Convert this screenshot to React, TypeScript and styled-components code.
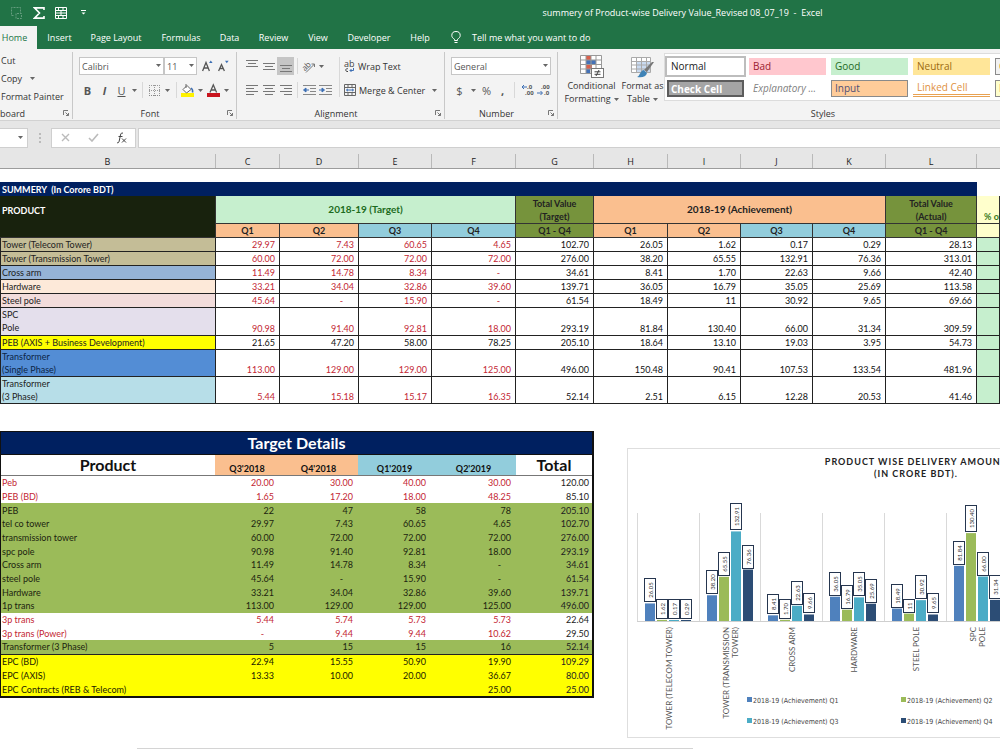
import React from "react";
import styled, { createGlobalStyle, css } from "styled-components";

const GlobalStyle = createGlobalStyle`
  * { box-sizing: border-box; }
  html, body { margin: 0; background: #fff; overflow-x: hidden; }
  body { font-family: "Open Sans", "Noto Sans", sans-serif; font-size: 9px; color: #333; }
  button, input, select { font: inherit; color: inherit; margin: 0; padding: 0; border: 0; background: none; }
`;

const SHEET_FONT = `Lato, "Open Sans", sans-serif`;
const RED = "#c32633";

/* ---------- Title bar and tabs ---------- */

const TitleBar = styled.header`
  display: flex;
  align-items: center;
  height: 26px;
  padding-bottom: 1px;
  background: #217346;
  color: #fff;
`;
const QuickAccess = styled.div`
  display: flex;
  align-items: center;
  gap: 8px;
  width: 365px;
  padding-left: 10px;
`;
const QuickButton = styled.button<{ $faded?: boolean }>`
  display: flex;
  justify-content: center;
  width: 14px;
  opacity: ${(p) => (p.$faded ? 0.3 : 1)};
`;
const DocumentTitle = styled.div`
  flex: 1;
  text-align: center;
  white-space: pre;
`;
const TabBar = styled.nav`
  display: flex;
  height: 23px;
  background: #217346;
  color: #fff;
`;
const Tab = styled.a<{ $active?: boolean; $width: number }>`
  display: flex;
  align-items: center;
  justify-content: center;
  width: ${(p) => p.$width}px;
  padding-right: ${(p) => (p.$active ? 8 : 0)}px;
  color: ${(p) => (p.$active ? "#217346" : "#fff")};
  background: ${(p) => (p.$active ? "#f3f3f3" : "transparent")};
  text-decoration: none;
  white-space: nowrap;
`;
const TellMe = styled.button`
  display: flex;
  align-items: center;
  gap: 11px;
  padding-left: 13px;
`;

/* ---------- Ribbon ---------- */

const Ribbon = styled.section`
  display: flex;
  height: 72px;
  padding-top: 3px;
  overflow: hidden;
  background: #f3f3f3;
  border-bottom: 1px solid #d2d2d2;
`;
const Group = styled.div<{ $width: number }>`
  display: flex;
  flex-direction: column;
  justify-content: space-between;
  flex: 0 0 ${(p) => p.$width}px;
  height: 67px;
  border-right: 1px solid #c8c8c8;
`;
const GroupBody = styled.div<{ $top?: number; $pad?: number }>`
  display: flex;
  padding-top: ${(p) => p.$top ?? 5}px;
  padding-left: ${(p) => p.$pad ?? 6}px;
`;
const Stack = styled.div<{ $gap?: number }>`
  display: flex;
  flex-direction: column;
  gap: ${(p) => p.$gap ?? 6}px;
`;
const ToolRow = styled.div`
  display: flex;
  align-items: center;
  height: 18px;
`;
const GroupFooter = styled.div`
  display: flex;
  align-items: center;
  height: 12px;
  padding-right: 3px;
`;
const GroupName = styled.span<{ $start?: boolean }>`
  flex: 1;
  text-align: ${(p) => (p.$start ? "left" : "center")};
`;
const ClipButton = styled.button`
  display: flex;
  align-items: center;
  gap: 8px;
  height: 17px;
  padding-left: 1px;
  white-space: nowrap;
`;
const Tool = styled.button<{ $w: number; $on?: boolean }>`
  display: flex;
  align-items: center;
  justify-content: center;
  width: ${(p) => p.$w}px;
  height: 18px;
  background: ${(p) => (p.$on ? "#c5c5c5" : "transparent")};
  font-size: 11px;
  color: #555;
  svg { overflow: visible; }
`;
const Rule = styled.span<{ $w: number; $h?: number }>`
  display: flex;
  justify-content: center;
  width: ${(p) => p.$w}px;
  &::before { content: ""; width: 1px; height: ${(p) => p.$h ?? 16}px; background: #d8d8d8; }
`;
const TextTool = styled.button`
  display: flex;
  align-items: center;
  gap: 3px;
  height: 18px;
  white-space: nowrap;
  svg { overflow: visible; }
`;
const ArrowSlot = styled.span`
  display: flex;
  justify-content: center;
  width: 12px;
`;
const SelectWrap = styled.label<{ $w: number }>`
  position: relative;
  width: ${(p) => p.$w}px;
  height: 18px;
  select {
    width: 100%;
    height: 18px;
    padding-left: 2px;
    appearance: none;
    background: #fff;
    border: 1px solid #c6c6c6;
    border-radius: 0;
    color: #555;
  }
  svg { position: absolute; right: 3px; top: 7px; }
`;
const BigTool = styled.button<{ $w: number }>`
  display: flex;
  flex-direction: column;
  align-items: center;
  gap: 1px;
  width: ${(p) => p.$w}px;
  padding-top: 2px;
  line-height: 12px;
  white-space: nowrap;
`;
const WithArrow = styled.span`
  display: flex;
  align-items: center;
  gap: 3px;
`;
const Gallery = styled.div`
  display: grid;
  grid-template-columns: repeat(5, 77px);
  grid-auto-rows: 17px;
  gap: 5px;
  flex: 1;
  min-width: 0;
  height: 48px;
  padding: 4px 0 0 2px;
  background: #fff;
  border: 1px solid #dcdcdc;
  border-right: 0;
`;
const StyleSwatch = styled.button<{ $bg?: string; $fg?: string; $kind?: string }>`
  padding-left: 4px;
  overflow: hidden;
  text-align: left;
  font-size: 10px;
  line-height: 15px;
  white-space: nowrap;
  background: ${(p) => p.$bg ?? "#fff"};
  color: ${(p) => p.$fg ?? "#222"};
  ${(p) => p.$kind === "selected" && css`outline: 2px solid #bdbdbd;`}
  ${(p) => p.$kind === "check" && css`border: 2px solid #5c5c5c; padding-left: 2px; line-height: 12px; font-weight: 700;`}
  ${(p) => p.$kind === "boxed" && css`border: 1px solid #8a8a8a; padding-left: 3px;`}
  ${(p) => p.$kind === "italic" && css`font-style: italic;`}
  ${(p) => p.$kind === "linked" && css`border-bottom: 3px double #e8a252;`}
`;

/* ---------- Formula bar ---------- */

const FormulaBar = styled.section`
  display: flex;
  align-items: center;
  height: 33px;
  background: #e6e6e6;
`;
const NameBox = styled.button`
  display: flex;
  align-items: center;
  justify-content: flex-end;
  width: 28px;
  height: 20px;
  padding-right: 4px;
  background: #fff;
  border: 1px solid #cfcfcf;
  border-left: 0;
`;
const Grip = styled.span`
  width: 23px;
  display: flex;
  justify-content: center;
`;
const FormulaActions = styled.div`
  display: flex;
  align-items: center;
  width: 85px;
  height: 20px;
  background: #fff;
  border: 1px solid #cfcfcf;
`;
const FormulaAction = styled.button`
  display: flex;
  justify-content: center;
  width: 28px;
`;
const FormulaInput = styled.input`
  flex: 1;
  min-width: 0;
  height: 20px;
  margin-left: 2px;
  background: #fff;
  border: 1px solid #cfcfcf;
  border-right: 0;
`;

/* ---------- Sheet ---------- */

const ColumnHeads = styled.div`
  display: flex;
  height: 15px;
  background: #e6e6e6;
  border-bottom: 1px solid #9c9c9c;
`;
const ColumnHead = styled.div<{ $w?: number }>`
  flex: ${(p) => (p.$w ? `0 0 ${p.$w}px` : "1 0 0")};
  padding-top: 2px;
  line-height: 12px;
  text-align: center;
  color: #222;
  border-right: ${(p) => (p.$w ? "1px solid #b9b9b9" : "0")};
`;
const Sheet = styled.main`
  overflow: hidden;
  padding-top: 13px;
  background: #fff;
  font-family: ${SHEET_FONT};
  color: #111;
`;
const SummaryTable = styled.table`
  width: 100%;
  height: 222px;
  table-layout: fixed;
  border-collapse: separate;
  border-spacing: 0;
  line-height: 13px;
  thead tr:nth-child(2) { height: 28px; }
`;
const Cell = styled.td<{ $bg?: string; $fg?: string; $dash?: boolean }>`
  padding: 0 ${(p) => (p.$dash ? 15 : 4)}px 0 0;
  overflow: hidden;
  text-align: right;
  vertical-align: bottom;
  white-space: nowrap;
  background: ${(p) => p.$bg ?? "transparent"};
  color: ${(p) => p.$fg ?? "#111"};
  border: solid #222;
  border-width: 0 1px 1px 0;
`;
const Label = styled.th<{ $bg: string; $fg?: string }>`
  padding: 0 0 0 1px;
  text-align: left;
  font-weight: 400;
  white-space: pre-line;
  background: ${(p) => p.$bg};
  color: ${(p) => p.$fg ?? "#222"};
  border: solid #222;
  border-width: 0 1px 1px 1px;
`;
const Head = styled.th<{ $bg: string; $fg?: string; $left?: number; $plain?: boolean; $size?: number }>`
  height: 14px;
  padding: 0 0 0 ${(p) => p.$left ?? 0}px;
  overflow: hidden;
  text-align: ${(p) => (p.$left ? "left" : "center")};
  font-weight: 700;
  font-size: ${(p) => p.$size ?? 9}px;
  white-space: pre;
  background: ${(p) => p.$bg};
  color: ${(p) => p.$fg ?? "#222"};
  border: solid #333;
  border-width: ${(p) => (p.$plain ? "0" : "0 1px 1px 0")};
`;

const Lower = styled.div`
  display: flex;
  align-items: flex-start;
  gap: 33px;
  padding-top: 27px;
`;
const DetailTable = styled.table`
  flex: 0 0 594px;
  width: 594px;
  height: 267px;
  table-layout: fixed;
  border-collapse: separate;
  border-spacing: 0;
  border: solid #111;
  border-width: 1px 2px 2px 1px;
  line-height: 13px;
`;
const DetailTitle = styled.th`
  height: 23px;
  padding: 0;
  background: #002060;
  color: #fff;
  font-size: 16px;
  line-height: 20px;
  border-bottom: 1px solid #111;
`;
const DetailHead = styled.th<{ $bg?: string; $big?: boolean }>`
  height: 21px;
  padding: 0;
  vertical-align: bottom;
  background: ${(p) => p.$bg ?? "#fff"};
  font-size: ${(p) => (p.$big ? 16 : 9)}px;
  line-height: ${(p) => (p.$big ? 20 : 13)}px;
  border-bottom: 1px solid #777;
`;
const DetailRow = styled.tr<{ $bg: string; $fg: string; $line?: boolean }>`
  background: ${(p) => p.$bg};
  color: ${(p) => p.$fg};
  th { padding: 0 0 0 1px; text-align: left; font-weight: 400; }
  th, td { border-bottom: ${(p) => (p.$line ? "1px solid #222" : "0")}; }
`;
const DetailCell = styled.td<{ $dash?: boolean; $total?: boolean }>`
  padding: 0 ${(p) => (p.$dash ? 15 : p.$total ? 3 : 5)}px 0 0;
  text-align: right;
  color: ${(p) => (p.$total ? "#222" : "inherit")};
`;
const ChartCard = styled.figure`
  flex: 0 0 578px;
  height: 290px;
  margin: 17px 0 0;
  padding-top: 7px;
  border: 1px solid #dedede;
`;
const ChartTitle = styled.figcaption`
  height: 25px;
  text-align: center;
  white-space: pre-line;
  font-weight: 700;
  line-height: 12px;
  letter-spacing: 1px;
  color: #222;
`;
const NextChart = styled.div`
  width: 556px;
  height: 2px;
  margin: 10px 0 0 137px;
  border-top: 1px solid #d4d4d4;
`;

/* ---------- Icons ---------- */

const Arrow = ({ color = "#666" }: { color?: string }) => (
  <svg width="5" height="3" viewBox="0 0 5 3"><path d="M0 0h5L2.5 3z" fill={color} /></svg>
);
const Launcher = () => (
  <svg width="6" height="6" viewBox="0 0 6 6" fill="none" stroke="#777">
    <path d="M.5 5V.5H5M2.5 2.5l3 3M5.5 3v2.5H3" />
  </svg>
);
const Lines = ({ widths, align, top = 0 }: { widths: number[]; align: "l" | "c" | "r"; top?: number }) => (
  <svg width="12" height="12" viewBox="0 0 12 12" shapeRendering="crispEdges">
    {widths.map((w, i) => (
      <rect key={i} x={align === "l" ? 0 : align === "c" ? (12 - w) / 2 : 12 - w} y={top + i * 3} width={w} height="1" fill="#777" />
    ))}
  </svg>
);
const Indent = ({ inward }: { inward?: boolean }) => (
  <svg width="13" height="11" viewBox="0 0 13 11">
    <path d="M0 .5h13M7 3.500h6M7 6.500h6M0 9.500h13" stroke="#888" />
    <path d={inward ? "M0 5h3.500M3 3l2.500 2L3 7z" : "M2 5h4M3 3L.5 5 3 7z"} stroke="#3d6fb4" fill="#3d6fb4" />
  </svg>
);
const Bulb = () => (
  <svg width="10" height="13" viewBox="0 0 10 13" fill="none" stroke="#fff">
    <path d="M3.500 9.500V8.300C2 7.300.8 6.200.8 4.500a4.200 4 0 0 1 8.400 0c0 1.700-1.200 2.800-2.700 3.800v1.200zM3.500 11.500h3" />
  </svg>
);
const TableGlyph = () => (
  <svg width="12" height="12" viewBox="0 0 12 12" fill="none" stroke="#fff">
    <path d="M.5.5h11v11H.5zM.5 3.500h11M.5 6h11M.5 8.500h11M3.500.5v3M8 .5v3M6 3.500v5M3.500 8.500v3M8 8.500v3" />
  </svg>
);
const MergeGlyph = () => (
  <svg width="12" height="12" viewBox="0 0 12 12" fill="none" stroke="#666">
    <path d="M.5.5h11v11H.5zM.5 3.500h11M.5 8.500h11M4 .5v3M8 .5v3M4 8.500v3M8 8.500v3" />
    <path d="M2.500 6h7M4 4.800L2.500 6 4 7.200M8 4.800L9.500 6 8 7.200" stroke="#3d6fb4" />
  </svg>
);
const WrapGlyph = () => (
  <svg width="11" height="13" viewBox="0 0 11 13">
    <text x="0" y="7" fontSize="9" fill="#444">ab</text>
    <path d="M4 8.800c-3-1-3 3.400 0 2.700" fill="none" stroke="#444" />
    <path d="M9.500 8v2.500H6M7.500 9L6 10.500 7.500 12" fill="none" stroke="#3d6fb4" />
  </svg>
);
const OrientGlyph = () => (
  <svg width="14" height="13" viewBox="0 0 14 13">
    <text x="1" y="9" fontSize="8" fill="#555" transform="rotate(-45 5 8)">ab</text>
    <path d="M4 12.500L12.500 4M9.500 4h3v3" fill="none" stroke="#777" />
  </svg>
);
const BorderGlyph = () => (
  <svg width="11" height="11" viewBox="0 0 11 11" fill="none" stroke="#999" strokeDasharray="1 1">
    <path d="M.5 0v11M5.500 0v11M10.500 0v11M0 .5h11M0 5.500h11" /><path d="M0 10.500h11" stroke="#888" />
  </svg>
);
const BucketGlyph = () => (
  <svg width="13" height="13" viewBox="0 0 13 13">
    <rect y="9" width="13" height="4" fill="#fff200" />
    <path d="M6 1.500l4 4L5.500 9 2 5.500zM5 0v4" fill="#fff" stroke="#666" />
    <path d="M10 4c1.500 1 2 2.500 1.500 4.500" fill="none" stroke="#3d6fb4" strokeWidth="1.500" />
  </svg>
);
const FontColorGlyph = () => (
  <svg width="13" height="13" viewBox="0 0 13 13">
    <path d="M3 8.500L6.300.8l3.300 7.700M4.200 6h4.200" fill="none" stroke="#555" strokeWidth="1.300" />
    <rect y="9" width="13" height="4" fill="#c8141e" />
  </svg>
);
const FontSizeGlyph = ({ up }: { up?: boolean }) => (
  <svg width="11" height="12" viewBox="0 0 11 12">
    <path d={up ? "M.6 11L4 2.500 7.400 11M1.800 8h4.400" : "M.6 11L3.500 4.500 6.400 11M1.800 8.500h3.400"} fill="none" stroke="#555" strokeWidth="1.300" />
    <path d={up ? "M7 3l1.800-2.500L10.600 3z" : "M7 .8h3.600L8.800 3.300z"} fill="#3d6fb4" />
  </svg>
);
const DecimalGlyph = ({ more }: { more?: boolean }) => (
  <svg width="13" height="12" viewBox="0 0 13 12">
    <text x={more ? 6 : 4} y="5" fontSize="6" fontWeight="700" fill="#555">{more ? ".0" : ".00"}</text>
    <text x={more ? 4 : 7} y="11" fontSize="6" fontWeight="700" fill="#555">{more ? ".00" : ".0"}</text>
    <path d={more ? "M1 3h5M3 1L1 3l2 2" : "M0 9h5M3.500 7l2 2-2 2"} fill="none" stroke="#3d6fb4" />
  </svg>
);
const ConditionalGlyph = () => (
  <svg width="24" height="24" viewBox="0 0 24 24">
    <rect x="1" y="1" width="20" height="18" fill="#fff" />
    <rect x="6" y="1" width="5" height="4" fill="#d9604c" /><rect x="6" y="5" width="10" height="5" fill="#4472b8" />
    <rect x="6" y="10" width="6" height="4" fill="#d9604c" /><rect x="6" y="14" width="4" height="5" fill="#4472b8" />
    <path d="M.5.5h21v18H.5zM.5 5h21M.5 9.500h21M.5 14h21M6 .5v18M11 .5v18M16 .5v18" fill="none" stroke="#999" />
    <rect x="11.500" y="13.500" width="12" height="9" fill="#fff" stroke="#777" />
    <path d="M14.500 16.800h6M14.500 19.300h6M19 15l-3 6" stroke="#444" />
  </svg>
);
const FormatTableGlyph = () => (
  <svg width="24" height="24" viewBox="0 0 24 24">
    <rect x="1" y="3" width="19" height="14" fill="#fff" /><rect x="6" y="6" width="14" height="11" fill="#c9daf0" />
    <path d="M.5 2.500h19v15H.5zM.5 6.500h19M.5 10h19M.5 14h19M5.500 2.500v15M10.500 2.500v15M15.500 2.500v15" fill="none" stroke="#aaa" />
    <path d="M23 7l-7 10-3-2 8-8z" fill="#777" />
    <path d="M12.500 15l3.500 3c-1 4-5 5-10 4 3-1 3-6 6.500-7z" fill="#3f83b7" />
  </svg>
);

/* ---------- Data ---------- */

const columns: [string, number][] = [
  ["B", 216], ["C", 64], ["D", 79], ["E", 73], ["F", 84], ["G", 78],
  ["H", 74], ["I", 73], ["J", 72], ["K", 73], ["L", 91],
];

type SummaryRow = { label: string; bg: string; fg?: string; black?: boolean; values: string[] };
const summary: SummaryRow[] = [
  { label: "Tower (Telecom Tower)", bg: "#c4bd97", values: "29.97 7.43 60.65 4.65 102.70 26.05 1.62 0.17 0.29 28.13".split(" ") },
  { label: "Tower (Transmission Tower)", bg: "#c4bd97", values: "60.00 72.00 72.00 72.00 276.00 38.20 65.55 132.91 76.36 313.01".split(" ") },
  { label: "Cross arm", bg: "#95b3d7", values: "11.49 14.78 8.34 - 34.61 8.41 1.70 22.63 9.66 42.40".split(" ") },
  { label: "Hardware", bg: "#fde9d9", values: "33.21 34.04 32.86 39.60 139.71 36.05 16.79 35.05 25.69 113.58".split(" ") },
  { label: "Steel pole", bg: "#f2dcdb", values: "45.64 - 15.90 - 61.54 18.49 11 30.92 9.65 69.66".split(" ") },
  { label: "SPC\nPole", bg: "#e4dfec", values: "90.98 91.40 92.81 18.00 293.19 81.84 130.40 66.00 31.34 309.59".split(" ") },
  { label: "PEB (AXIS + Business Development)", bg: "#ffff00", black: true, values: "21.65 47.20 58.00 78.25 205.10 18.64 13.10 19.03 3.95 54.73".split(" ") },
  { label: "Transformer\n(Single Phase)", bg: "#538dd5", fg: "#0c2445", values: "113.00 129.00 129.00 125.00 496.00 150.48 90.41 107.53 133.54 481.96".split(" ") },
  { label: "Transformer\n(3 Phase)", bg: "#b7dee8", values: "5.44 15.18 15.17 16.35 52.14 2.51 6.15 12.28 20.53 41.46".split(" ") },
];

type Tone = "plain" | "green" | "yellow";
const details: [string, Tone, string][] = [
  ["Peb", "plain", "20.00 30.00 40.00 30.00 120.00"],
  ["PEB (BD)", "plain", "1.65 17.20 18.00 48.25 85.10"],
  ["PEB", "green", "22 47 58 78 205.10"],
  ["tel co tower", "green", "29.97 7.43 60.65 4.65 102.70"],
  ["transmission tower", "green", "60.00 72.00 72.00 72.00 276.00"],
  ["spc pole", "green", "90.98 91.40 92.81 18.00 293.19"],
  ["Cross arm", "green", "11.49 14.78 8.34 - 34.61"],
  ["steel pole", "green", "45.64 - 15.90 - 61.54"],
  ["Hardware", "green", "33.21 34.04 32.86 39.60 139.71"],
  ["1p trans", "green", "113.00 129.00 129.00 125.00 496.00"],
  ["3p trans", "plain", "5.44 5.74 5.73 5.73 22.64"],
  ["3p trans (Power)", "plain", "- 9.44 9.44 10.62 29.50"],
  ["Transformer (3 Phase)", "green", "5 15 15 16 52.14"],
  ["EPC (BD)", "yellow", "22.94 15.55 50.90 19.90 109.29"],
  ["EPC (AXIS)", "yellow", "13.33 10.00 20.00 36.67 80.00"],
  ["EPC Contracts (REB & Telecom)", "yellow", "   25.00 25.00"],
];
const toneBg = { plain: "#ffffff", green: "#9bbb59", yellow: "#ffff00" };
const toneFg = { plain: RED, green: "#1c2410", yellow: "#222200" };

const categories: { lines: string[]; values: string[] }[] = [
  { lines: ["TOWER (TELECOM TOWER)"], values: ["26.05", "1.62", "0.17", "0.29"] },
  { lines: ["TOWER (TRANSMISSION", "TOWER)"], values: ["38.20", "65.55", "132.91", "76.36"] },
  { lines: ["CROSS ARM"], values: ["8.41", "1.70", "22.63", "9.66"] },
  { lines: ["HARDWARE"], values: ["36.05", "16.79", "35.05", "25.69"] },
  { lines: ["STEEL POLE"], values: ["18.49", "11", "30.92", "9.65"] },
  { lines: ["SPC", "POLE"], values: ["81.84", "130.40", "66.00", "31.34"] },
];
const series = ["#4f81bd", "#9bbb59", "#4bacc6", "#2c4d75"];
const labelHeight: Record<number, number> = { 2: 13, 4: 19, 5: 23, 6: 26 };

/* ---------- Parts ---------- */

const Dropdown = ({ label, value, width }: { label: string; value: string; width: number }) => (
  <SelectWrap $w={width}>
    <select aria-label={label} defaultValue={value}><option>{value}</option></select>
    <Arrow />
  </SelectWrap>
);

const Chart = () => {
  const base = 140;
  const step = 61.7;
  return (
    <svg width="576" height="256" fontFamily="Lato, sans-serif" role="img" aria-label="Delivery by product and quarter">
      {categories.map((cat, c) => {
        const left = 9 + Math.round(c * step);
        const mid = left + 35;
        return (
          <g key={cat.lines[0]}>
            <path d={`M${left + 0.5} 32V${base}`} stroke="#d9d9d9" />
            {cat.values.map((v, i) => {
              const h = Math.max(Number(v) * 0.674, 1);
              const x = left + 8 + i * 12;
              const lh = labelHeight[v.length];
              const bottom = Math.round(Math.min(base - h - 2, base - 3)) + 0.5;
              return (
                <g key={i}>
                  <rect x={x} y={base - h} width="10" height={h} fill={series[i]} />
                  <rect x={x - 0.5} y={bottom - lh} width="11" height={lh} fill="#fff" stroke="#26364f" />
                  <text transform={`translate(${x + 7.5} ${bottom - lh / 2}) rotate(-90)`} textAnchor="middle" fontSize="6" fill="#333">{v}</text>
                </g>
              );
            })}
            {cat.lines.map((line, i) => (
              <text key={line} transform={`translate(${mid + (cat.lines.length > 1 ? -5 : 0) + i * 9} ${base + 6}) rotate(-90)`} textAnchor="end" fontSize="8" fill="#555">{line}</text>
            ))}
          </g>
        );
      })}
      <path d={`M9 ${base + 0.5}H567`} stroke="#cfcfcf" />
      {series.map((color, i) => (
        <g key={color} transform={`translate(${i % 2 ? 273 : 119} ${i > 1 ? 237 : 216})`}>
          <rect width="5" height="5" fill={color} />
          <text x="6" y="6" fontSize="7" fontFamily="'DejaVu Sans Condensed', Lato, sans-serif" fill="#444">2018-19 (Achievement) Q{i + 1}</text>
        </g>
      ))}
    </svg>
  );
};

export default function App() {
  return (
    <>
      <GlobalStyle />
      <TitleBar>
        <QuickAccess>
          <QuickButton $faded aria-label="Preview">
            <svg width="12" height="12" viewBox="0 0 12 12" fill="none" stroke="#fff"><path d="M2.500 8.500h-2v-8h9v6M5 11.500V6.500h5.500v5z" strokeDasharray="2 1" /></svg>
          </QuickButton>
          <QuickButton aria-label="Sum">
            <svg width="12" height="12" viewBox="0 0 12 12" fill="none" stroke="#fff" strokeWidth="1.600"><path d="M11 3V.9H1.500L6.500 6l-5 5.100H11V9" /></svg>
          </QuickButton>
          <QuickButton aria-label="Table"><TableGlyph /></QuickButton>
          <QuickButton aria-label="Customize toolbar">
            <svg width="5" height="5" viewBox="0 0 5 5"><path d="M0 0h5v1H0zM.5 2.500h4l-2 2z" fill="#fff" /></svg>
          </QuickButton>
        </QuickAccess>
        <DocumentTitle>summery of Product-wise Delivery Value_Revised 08_07_19  -  Excel</DocumentTitle>
      </TitleBar>
      <TabBar>
        <Tab href="#home" $active $width={37}>Home</Tab>
        <Tab href="#insert" $width={45}>Insert</Tab>
        <Tab href="#layout" $width={68}>Page Layout</Tab>
        <Tab href="#formulas" $width={62}>Formulas</Tab>
        <Tab href="#data" $width={35}>Data</Tab>
        <Tab href="#review" $width={53}>Review</Tab>
        <Tab href="#view" $width={36}>View</Tab>
        <Tab href="#developer" $width={66}>Developer</Tab>
        <Tab href="#help" $width={36}>Help</Tab>
        <TellMe><Bulb />Tell me what you want to do</TellMe>
      </TabBar>

      <Ribbon>
        <Group $width={73}>
          <Stack $gap={1}>
            <ClipButton>Cut</ClipButton>
            <ClipButton>Copy <Arrow /></ClipButton>
            <ClipButton>Format Painter</ClipButton>
          </Stack>
          <GroupFooter><GroupName $start>board</GroupName><Launcher /></GroupFooter>
        </Group>

        <Group $width={164}>
          <GroupBody>
            <Stack>
              <ToolRow>
                <Dropdown label="Font" value="Calibri" width={85} />
                <Dropdown label="Font size" value="11" width={33} />
                <Tool $w={20} aria-label="Increase font size"><FontSizeGlyph up /></Tool>
                <Tool $w={13} aria-label="Decrease font size"><FontSizeGlyph /></Tool>
              </ToolRow>
              <ToolRow>
                <Tool $w={17}><b>B</b></Tool>
                <Tool $w={17}><i><b>I</b></i></Tool>
                <Tool $w={17}><u>U</u></Tool>
                <Tool $w={8} aria-label="Underline options"><Arrow /></Tool>
                <Rule $w={8} />
                <Tool $w={16} aria-label="Borders"><BorderGlyph /></Tool>
                <Tool $w={10} aria-label="Border options"><Arrow /></Tool>
                <Rule $w={8} />
                <Tool $w={15} aria-label="Fill color"><BucketGlyph /></Tool>
                <Tool $w={10} aria-label="Fill options"><Arrow /></Tool>
                <Tool $w={16} aria-label="Font color"><FontColorGlyph /></Tool>
                <Tool $w={10} aria-label="Font color options"><Arrow /></Tool>
              </ToolRow>
            </Stack>
          </GroupBody>
          <GroupFooter><GroupName>Font</GroupName><Launcher /></GroupFooter>
        </Group>

        <Group $width={208}>
          <GroupBody>
            <Stack>
              <ToolRow>
                <Tool $w={17} aria-label="Top align"><Lines widths={[12, 8, 12]} align="c" /></Tool>
                <Tool $w={17} aria-label="Middle align"><Lines widths={[12, 8, 12]} align="c" top={3} /></Tool>
                <Tool $w={17} $on aria-label="Bottom align"><Lines widths={[12, 8, 12]} align="c" top={5} /></Tool>
                <Rule $w={7} />
                <Tool $w={15} aria-label="Orientation"><OrientGlyph /></Tool>
                <Tool $w={10} aria-label="Orientation options"><Arrow /></Tool>
              </ToolRow>
              <ToolRow>
                <Tool $w={17} aria-label="Align left"><Lines widths={[12, 8, 12, 8]} align="l" top={1} /></Tool>
                <Tool $w={17} aria-label="Center"><Lines widths={[12, 8, 12, 8]} align="c" top={1} /></Tool>
                <Tool $w={17} aria-label="Align right"><Lines widths={[12, 8, 12, 8]} align="r" top={1} /></Tool>
                <Rule $w={7} />
                <Tool $w={16} aria-label="Decrease indent"><Indent /></Tool>
                <Tool $w={17} aria-label="Increase indent"><Indent inward /></Tool>
              </ToolRow>
            </Stack>
            <Rule $w={10} $h={40} />
            <Stack>
              <TextTool><WrapGlyph />Wrap Text</TextTool>
              <TextTool><MergeGlyph />Merge &amp; Center<ArrowSlot><Arrow /></ArrowSlot></TextTool>
            </Stack>
          </GroupBody>
          <GroupFooter><GroupName>Alignment</GroupName><Launcher /></GroupFooter>
        </Group>

        <Group $width={113}>
          <GroupBody>
            <Stack>
              <ToolRow><Dropdown label="Number format" value="General" width={100} /></ToolRow>
              <ToolRow>
                <Tool $w={17}>$</Tool>
                <Tool $w={10} aria-label="Currency options"><Arrow /></Tool>
                <Tool $w={17}>%</Tool>
                <Tool $w={15}><b>,</b></Tool>
                <Rule $w={9} />
                <Tool $w={16} aria-label="Increase decimal"><DecimalGlyph more /></Tool>
                <Tool $w={16} aria-label="Decrease decimal"><DecimalGlyph /></Tool>
              </ToolRow>
            </Stack>
          </GroupBody>
          <GroupFooter><GroupName>Number</GroupName><Launcher /></GroupFooter>
        </Group>

        <Group $width={534}>
          <GroupBody $top={1} $pad={4}>
            <BigTool $w={59}><ConditionalGlyph /><span>Conditional</span><WithArrow>Formatting<Arrow /></WithArrow></BigTool>
            <BigTool $w={43}><FormatTableGlyph /><span>Format as</span><WithArrow>Table<Arrow /></WithArrow></BigTool>
            <Gallery>
              <StyleSwatch $kind="selected">Normal</StyleSwatch>
              <StyleSwatch $bg="#ffc7ce" $fg="#9c2030">Bad</StyleSwatch>
              <StyleSwatch $bg="#c6efce" $fg="#1f6b25">Good</StyleSwatch>
              <StyleSwatch $bg="#ffe699" $fg="#9c6a10">Neutral</StyleSwatch>
              <StyleSwatch $kind="boxed" $bg="#f2f2f2" $fg="#e07b20">Calculation</StyleSwatch>
              <StyleSwatch $kind="check" $bg="#a5a5a5" $fg="#fff">Check Cell</StyleSwatch>
              <StyleSwatch $kind="italic" $fg="#7f7f7f">Explanatory ...</StyleSwatch>
              <StyleSwatch $kind="boxed" $bg="#ffcc99" $fg="#4f4f76">Input</StyleSwatch>
              <StyleSwatch $kind="linked" $fg="#e09040">Linked Cell</StyleSwatch>
              <StyleSwatch $kind="boxed" $bg="#ffffcc" $fg="#333">Note</StyleSwatch>
            </Gallery>
          </GroupBody>
          <GroupFooter><GroupName>Styles</GroupName></GroupFooter>
        </Group>
      </Ribbon>

      <FormulaBar>
        <NameBox aria-label="Name box"><Arrow /></NameBox>
        <Grip><svg width="2" height="10" viewBox="0 0 2 10"><path d="M0 0h2v2H0zM0 4h2v2H0zM0 8h2v2H0z" fill="#bbb" /></svg></Grip>
        <FormulaActions>
          <FormulaAction aria-label="Cancel"><svg width="9" height="9" viewBox="0 0 9 9"><path d="M1 1l7 7M8 1L1 8" stroke="#bbb" strokeWidth="1.400" /></svg></FormulaAction>
          <FormulaAction aria-label="Enter"><svg width="11" height="9" viewBox="0 0 11 9"><path d="M1 5l3 3 6-7" fill="none" stroke="#bbb" strokeWidth="1.600" /></svg></FormulaAction>
          <FormulaAction aria-label="Insert function"><svg width="11" height="12" viewBox="0 0 11 12" fill="none" stroke="#444"><path d="M7 1.200C5.500.5 4.800 1.500 4.500 3L3.200 9c-.3 1.500-1 2.200-2.200 1.600M2.500 4.500h4M6 6.500l4 4M10 6.500l-4 4" /></svg></FormulaAction>
        </FormulaActions>
        <FormulaInput aria-label="Formula" />
      </FormulaBar>

      <ColumnHeads>
        {columns.map(([name, w]) => <ColumnHead key={name} $w={w}>{name}</ColumnHead>)}
        <ColumnHead />
      </ColumnHeads>

      <Sheet>
        <SummaryTable>
          <colgroup>
            {columns.map(([name, w]) => <col key={name} width={w} />)}
            <col />
          </colgroup>
          <thead>
            <tr>
              <Head $bg="#002060" $fg="#fff" $left={2} $plain colSpan={11}>{"SUMMERY  (In Corore BDT)"}</Head>
              <Head as="td" $bg="#fff" $plain />
            </tr>
            <tr>
              <Head $bg="#18220d" $fg="#fff" $left={2} rowSpan={2}>{"PRODUCT\n "}</Head>
              <Head $bg="#c6efce" $fg="#1c6b20" $size={10} colSpan={4}>2018-19 (Target)</Head>
              <Head $bg="#76933c">{"Total Value\n(Target)"}</Head>
              <Head $bg="#fabf8f" $size={10} colSpan={4}>2018-19 (Achievement)</Head>
              <Head $bg="#76933c">{"Total Value\n(Actual)"}</Head>
              <Head $bg="#ffffcc" $fg="#3a7a1e" $left={7}>{"\n% of"}</Head>
            </tr>
            <tr>
              {["Q1", "Q2", "Q3", "Q4", "Q1 - Q4", "Q1", "Q2", "Q3", "Q4", "Q1 - Q4"].map((q, i) => (
                <Head key={i} $bg={i % 5 === 4 ? "#76933c" : i % 5 < 2 ? "#fabf8f" : "#92cddc"}>{q}</Head>
              ))}
              <Head as="td" $bg="#ffffcc" />
            </tr>
          </thead>
          <tbody>
            {summary.map((row) => (
              <tr key={row.label}>
                <Label $bg={row.bg} $fg={row.fg}>{row.label}</Label>
                {row.values.map((v, i) => (
                  <Cell key={i} $dash={v === "-"} $fg={i < 4 && !row.black ? RED : "#111"}>{v}</Cell>
                ))}
                <Cell $bg="#c6efce" />
              </tr>
            ))}
          </tbody>
        </SummaryTable>

        <Lower>
          <DetailTable>
            <colgroup>
              <col width={214} /><col width={64} /><col width={79} /><col width={73} /><col width={85} /><col />
            </colgroup>
            <thead>
              <tr><DetailTitle colSpan={6}>Target Details</DetailTitle></tr>
              <tr>
                <DetailHead $big>Product</DetailHead>
                <DetailHead $bg="#fabf8f">Q3'2018</DetailHead>
                <DetailHead $bg="#fabf8f">Q4'2018</DetailHead>
                <DetailHead $bg="#92cddc">Q1'2019</DetailHead>
                <DetailHead $bg="#92cddc">Q2'2019</DetailHead>
                <DetailHead $big>Total</DetailHead>
              </tr>
            </thead>
            <tbody>
              {details.map(([name, tone, values]) => (
                <DetailRow key={name} $bg={toneBg[tone]} $fg={toneFg[tone]} $line={name === "Transformer (3 Phase)"}>
                  <th scope="row">{name}</th>
                  {values.split(" ").map((v, i) => (
                    <DetailCell key={i} $dash={v === "-"} $total={i >= 4}>{v}</DetailCell>
                  ))}
                </DetailRow>
              ))}
            </tbody>
          </DetailTable>
          <ChartCard>
            <ChartTitle>{"PRODUCT WISE DELIVERY AMOUNT\n(IN CRORE BDT)."}</ChartTitle>
            <Chart />
          </ChartCard>
        </Lower>
        <NextChart />
      </Sheet>
    </>
  );
}
